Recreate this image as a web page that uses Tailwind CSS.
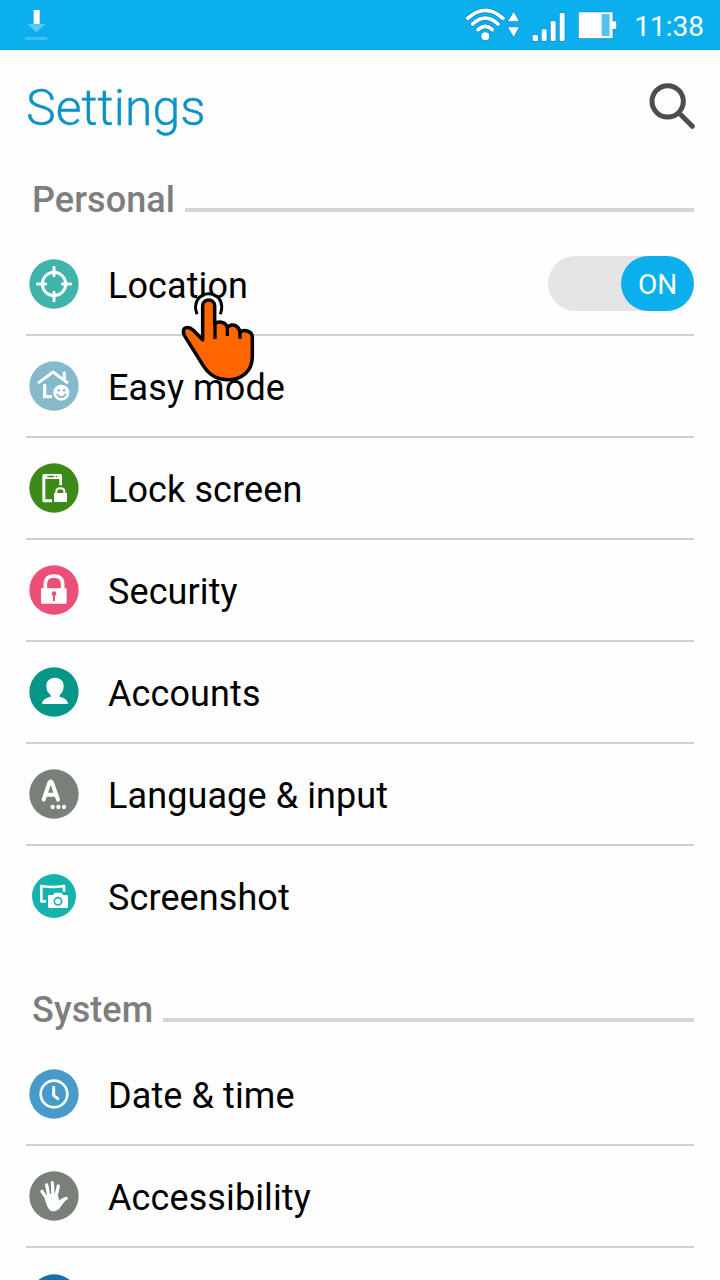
<!DOCTYPE html>
<html lang="en">
<head>
<meta charset="utf-8">
<title>Settings</title>
<script src="https://cdn.jsdelivr.net/npm/@tailwindcss/browser@4"></script>
</head>
<body class="bg-[#fefefe] overflow-hidden">
<div class="relative flex h-[1280px] w-[720px] flex-col overflow-hidden bg-[#fefefe] font-['Roboto',sans-serif] text-black">

  <!-- Status bar -->
  <header class="flex h-[50px] shrink-0 items-center justify-between bg-[#0cafee] text-white">
    <svg class="h-[50px] w-[60px]" viewBox="0 0 180 150">
      <path d="M82 72H136L109 97Z" fill="#55c8f3"/>
      <path d="M75 111H142V120H75Z" fill="#3dbff1"/>
      <path d="M101 30H119V72H101Z" fill="#fff"/>
    </svg>
    <div class="flex items-center pr-4">
      <svg class="h-[50px] w-[160px]" viewBox="40 0 480 150">
        <g fill="none" stroke="#0a86c2" stroke-linecap="round" stroke-width="15">
          <path d="M54 55Q107 7 160 55"/><path d="M69 72Q107 37 145 72"/><path d="M85 89Q107 69 128 89"/>
        </g>
        <g fill="#fff" stroke="#0a86c2" stroke-width="4" paint-order="stroke">
          <circle cx="107" cy="109" r="12"/>
          <path d="M175 64L192 36L208 64Z"/><path d="M175 82H208L192 110Z"/>
          <rect x="249" y="105" width="16" height="18" rx="4"/>
          <rect x="276" y="88" width="15" height="35" rx="4"/>
          <rect x="303" y="63" width="15" height="60" rx="4"/>
          <rect x="330" y="39" width="15" height="84" rx="4"/>
          <path d="M387 37H489V64H500V87H489V115H387Z"/>
        </g>
        <g fill="none" stroke="#fff" stroke-linecap="round" stroke-width="11">
          <path d="M54 55Q107 7 160 55"/><path d="M69 72Q107 37 145 72"/><path d="M85 89Q107 69 128 89"/>
        </g>
        <rect x="456" y="42" width="24" height="66" fill="#55c3f0"/>
      </svg>
      <span class="ml-[10px] text-[28px] leading-[50px] pt-[3px] w-[71px] text-right whitespace-nowrap">11:38</span>
    </div>
  </header>

  <!-- Title bar -->
  <div class="flex h-[110px] shrink-0 items-center justify-between pl-[26px] pr-[24px]">
    <h1 class="pt-[6px] text-[50px] font-light leading-[60px] text-[#0c92c5] [-webkit-text-stroke:0.4px_#0c92c5]">Settings</h1>
    <svg class="h-[48px] w-[48px]" viewBox="594 243 144 144" fill="none" stroke="#4d4d4d">
      <circle cx="653" cy="304" r="47" stroke-width="15"/>
      <path d="M688 340L727 379" stroke-width="15" stroke-linecap="round"/>
    </svg>
  </div>

  <!-- Personal -->
  <div class="flex h-[74px] shrink-0 pl-8 pr-[26px]">
    <h2 class="pt-[18px] text-[36px] font-medium leading-[44px] tracking-[0.1px] text-[#7e7e7e]">Personal</h2>
    <div class="ml-[10px] mt-[48px] h-1 flex-1 bg-[#d3d5d7]"></div>
  </div>

  <ul class="flex shrink-0 flex-col pl-[26px] pr-[26px] text-[36px] leading-[42px] tracking-[0.1px]">
    <li class="flex h-[102px] items-center border-b-2 border-[#cfcfcf] pl-[3px]">
      <svg class="h-[50px] w-[50px]" viewBox="27 27 150 150">
        <circle cx="102" cy="102" r="74" fill="#40b3ab"/>
        <g fill="none" stroke="#fff" stroke-width="9" stroke-linecap="round">
          <circle cx="102" cy="102" r="35"/>
          <path d="M102 52V77M102 127V152M52 102H77M127 102H152"/>
        </g>
      </svg>
      <span class="ml-[29px] pt-[3px]">Location</span>
      <div class="mb-[1px] ml-auto flex h-[55px] w-[146px] justify-end rounded-full bg-[#e5e5e5]">
        <div class="flex w-[73px] items-center justify-center rounded-full bg-[#0cafee] pt-[2px] text-[28px] leading-[32px] tracking-normal text-white">ON</div>
      </div>
    </li>
    <li class="flex h-[102px] items-center border-b-2 border-[#cfcfcf] pl-[3px]">
      <svg class="h-[50px] w-[50px]" viewBox="27 333 150 150">
        <circle cx="102" cy="408" r="74" fill="#85bacb"/>
        <path d="M57 397L99 366L141 397M133 368V390" fill="none" stroke="#fff" stroke-width="9" stroke-linecap="round" stroke-linejoin="round"/>
        <path d="M74 403V440H96" fill="none" stroke="#fff" stroke-width="10"/>
        <circle cx="124" cy="428" r="24" fill="#fff"/>
        <circle cx="116" cy="421" r="4" fill="#85bacb"/><circle cx="132" cy="421" r="4" fill="#85bacb"/>
        <path d="M110 431Q124 452 138 431" fill="none" stroke="#85bacb" stroke-width="5"/>
      </svg>
      <span class="ml-[29px] pt-[3px]">Easy mode</span>
    </li>
    <li class="flex h-[102px] items-center border-b-2 border-[#cfcfcf] pl-[3px]">
      <svg class="h-[50px] w-[50px]" viewBox="27 39 150 150">
        <circle cx="102" cy="114" r="74" fill="#3c8a17"/>
        <path fill="#fff" fill-rule="evenodd" d="M72 72H121Q126 72 126 77V106H118V87H76V148H96V157H72Q67 157 67 152V77Q67 72 72 72ZM82 77V82H102V77ZM107 77V82H111V77Z"/>
        <path fill="#fff" d="M102 129H141V156H102Z"/>
        <path d="M109 130V124Q109 115 121 115T133 124V130" fill="none" stroke="#fff" stroke-width="6"/>
      </svg>
      <span class="ml-[29px] pt-[3px]">Lock screen</span>
    </li>
    <li class="flex h-[102px] items-center border-b-2 border-[#cfcfcf] pl-[3px]">
      <svg class="h-[50px] w-[50px]" viewBox="27 345 150 150">
        <circle cx="102" cy="420" r="74" fill="#ea5078"/>
        <path d="M76 418V402Q76 378 102 378T128 402V418" fill="none" stroke="#fff" stroke-width="11"/>
        <rect x="63" y="415" width="77" height="46" rx="2" fill="#fff"/>
        <circle cx="102" cy="431" r="7" fill="#ea5078"/><path d="M99 431H105V453H99Z" fill="#ea5078"/>
      </svg>
      <span class="ml-[29px] pt-[3px]">Security</span>
    </li>
    <li class="flex h-[102px] items-center border-b-2 border-[#cfcfcf] pl-[3px]">
      <svg class="h-[50px] w-[50px]" viewBox="27 36 150 150">
        <circle cx="102" cy="111" r="74" fill="#069688"/>
        <path fill="#fff" d="M105 68C122 68 132 79 131 95C130 108 125 115 119 119V125C133 129 143 134 144 147H66C67 134 78 129 92 125V119C85 115 80 108 79 95C78 79 89 68 105 68Z"/>
      </svg>
      <span class="ml-[29px] pt-[3px]">Accounts</span>
    </li>
    <li class="flex h-[102px] items-center border-b-2 border-[#cfcfcf] pl-[3px]">
      <svg class="h-[50px] w-[50px]" viewBox="27 342 150 150">
        <circle cx="102" cy="417" r="74" fill="#788079"/>
        <path d="M71 434L88 383Q92 376 96 383L114 434M79 419H105" fill="none" stroke="#fff" stroke-width="12" stroke-linecap="round" stroke-linejoin="round"/>
        <g fill="#fff"><circle cx="98" cy="456" r="6.5"/><circle cx="115" cy="456" r="6.5"/><circle cx="132" cy="456" r="6.5"/></g>
      </svg>
      <span class="ml-[29px] pt-[3px]">Language &amp; input</span>
    </li>
    <li class="flex h-[100px] items-center pl-[3px]">
      <svg class="h-[50px] w-[50px]" viewBox="27 18 150 150">
        <circle cx="102" cy="93" r="66" fill="#14b3ad"/>
        <path d="M78 109H64V63Q98 69 132 63V80" fill="none" stroke="#fff" stroke-width="8" stroke-linejoin="round"/>
        <path fill="#fff" stroke="#14b3ad" stroke-width="4" paint-order="stroke" d="M88 90H99L104 83H124L129 90H140Q144 90 144 94V125Q144 129 140 129H88Q84 129 84 125V94Q84 90 88 90Z"/>
        <circle cx="114" cy="109" r="11" fill="none" stroke="#14b3ad" stroke-width="5"/>
      </svg>
      <span class="ml-[29px] pt-[3px]">Screenshot</span>
    </li>
  </ul>

  <!-- System -->
  <div class="mt-6 flex h-[74px] shrink-0 pl-8 pr-[26px]">
    <h2 class="pt-[18px] text-[36px] font-medium leading-[44px] tracking-[0.1px] text-[#7e7e7e]">System</h2>
    <div class="ml-[9.5px] mt-[48px] h-1 flex-1 bg-[#d3d5d7]"></div>
  </div>

  <ul class="flex shrink-0 flex-col pl-[26px] pr-[26px] text-[36px] leading-[42px] tracking-[0.1px]">
    <li class="flex h-[102px] items-center border-b-2 border-[#cfcfcf] pl-[3px]">
      <svg class="h-[50px] w-[50px]" viewBox="27 27 150 150">
        <circle cx="102" cy="102" r="74" fill="#489aca"/>
        <circle cx="102" cy="102" r="40" fill="none" stroke="#fff" stroke-width="8"/>
        <path d="M101 82V106L113 116" fill="none" stroke="#fff" stroke-width="9" stroke-linecap="round" stroke-linejoin="round"/>
      </svg>
      <span class="ml-[29px] pt-[3px]">Date &amp; time</span>
    </li>
    <li class="flex h-[102px] items-center border-b-2 border-[#cfcfcf] pl-[3px]">
      <svg class="h-[50px] w-[50px]" viewBox="27 333 150 150">
        <circle cx="102" cy="408" r="74" fill="#788079"/>
        <path d="M82 418L66 394M87 410L80 375M99 406L97 368M108 408L115 378" stroke="#fff" stroke-width="10" stroke-linecap="round" fill="none"/>
        <path fill="#fff" d="M76 408L83 402H112L118 421C125 417 132 410 139 410Q146 412 143 417C137 420 129 431 122 440C116 450 108 454 98 454C86 453 81 438 75 420Z"/>
      </svg>
      <span class="ml-[29px] pt-[3px]">Accessibility</span>
    </li>
    <li class="flex h-[102px] items-center pl-[3px]">
      <svg class="h-[50px] w-[50px]" viewBox="27 639 150 150"><circle cx="102" cy="714" r="74" fill="#176fac"/></svg>
    </li>
  </ul>

  <!-- Tap pointer overlay -->
  <svg class="absolute left-[160px] top-[260px] h-[150px] w-[140px]" viewBox="0 0 420 450">
    <path d="M115 160C104 130 119 107 146 107S188 130 177 160" fill="#fefefe"/>
    <path d="M111 163C98 128 117 101 146 101S194 128 181 163" fill="none" stroke="#000" stroke-width="9"/>
    <path d="M128 239V138C128 114 164 114 164 138V192C172 184 197 182 202 203C211 189 236 193 240 217C249 208 277 210 277 232V290C277 332 247 359 203 359C169 359 149 346 131 319L73 226C62 202 84 196 99 210Z" fill="#ff6600" stroke="#000" stroke-width="10.5" stroke-linejoin="round"/>
    <path d="M165 190V237M202 200V228M240 214V236" fill="none" stroke="#000" stroke-width="10"/>
  </svg>
</div>
</body>
</html>
